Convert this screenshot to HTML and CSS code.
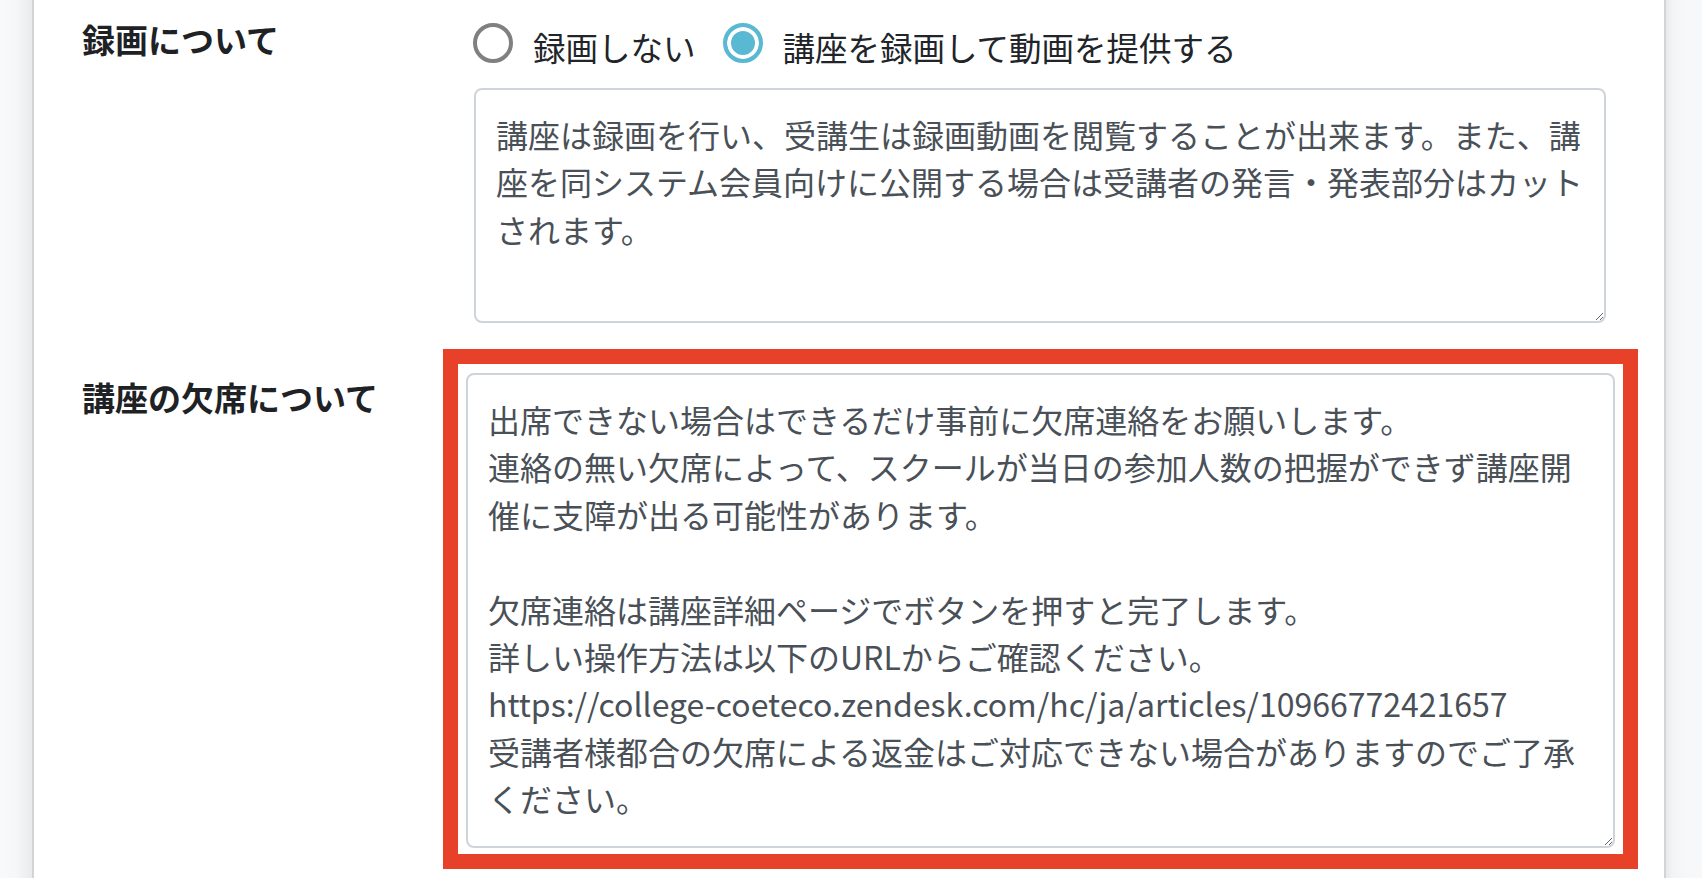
FILE: index.html
```html
<!DOCTYPE html>
<html lang="ja">
<head>
<meta charset="utf-8">
<title>講座設定</title>
<link rel="stylesheet" href="styles.css">
</head>
<body>
<div class="page">
  <div class="gutter gutter-left"></div>
  <main class="main">
    <div class="form">
      <div class="form-label first">録画について</div>
      <div class="control">
        <div class="radios">
          <label class="radio"><input type="radio" name="rec" value="0"><span>録画しない</span></label>
          <label class="radio"><input type="radio" name="rec" value="1" checked><span>講座を録画して動画を提供する</span></label>
        </div>
        <textarea class="field field-rec">講座は録画を行い、受講生は録画動画を閲覧することが出来ます。また、講座を同システム会員向けに公開する場合は受講者の発言・発表部分はカットされます。</textarea>
      </div>

      <div class="form-label second">講座の欠席について</div>
      <div class="control highlight">
        <textarea class="field field-absence">出席できない場合はできるだけ事前に欠席連絡をお願いします。
連絡の無い欠席によって、スクールが当日の参加人数の把握ができず講座開催に支障が出る可能性があります。

欠席連絡は講座詳細ページでボタンを押すと完了します。
詳しい操作方法は以下のURLからご確認ください。
https://college-coeteco.zendesk.com/hc/ja/articles/10966772421657
受講者様都合の欠席による返金はご対応できない場合がありますのでご了承ください。</textarea>
      </div>
    </div>
  </main>
  <div class="gutter gutter-right"></div>
</div>
</body>
</html>
```

FILE: styles.css
```css
* { box-sizing: border-box; }

html, body {
  margin: 0;
  padding: 0;
  height: 100%;
  background: #ffffff;
  font-family: "Noto Sans CJK JP", "Noto Sans", sans-serif;
  color: #212529;
}

.page {
  display: flex;
  height: 878px;
  overflow: hidden;
}

.gutter-left {
  width: 34px;
  flex: none;
  background: linear-gradient(to right, #f8f9fb 0%, #f6f7f9 50%, #e9eaec 100%);
  border-right: 2px solid #d3d4d6;
}

.gutter-right {
  flex: 1;
  border-left: 2px solid #d3d4d6;
  background: linear-gradient(to right, #e9eaec 0%, #f3f4f6 20%, #f7f8fa 60%);
}

.main {
  width: 1630px;
  flex: none;
  padding: 15px 58px 0 48px;
  background: #ffffff;
}

.form {
  display: grid;
  grid-template-columns: 392px 1fr;
  row-gap: 26px;
  align-items: start;
}

.form-label {
  font-size: 33px;
  line-height: 48px;
  font-weight: 700;
  color: #1f2225;
  white-space: nowrap;
}

.form-label.second {
  margin-top: 24px;
}

.control {
  display: flex;
  flex-direction: column;
}

.radios {
  display: flex;
  align-items: flex-start;
  margin-top: 8px;
  margin-bottom: 18px;
}

.radio {
  display: flex;
  align-items: flex-start;
  margin-right: 28px;
  font-size: 32.5px;
  line-height: 47px;
  color: #212529;
  cursor: pointer;
}

.radio input {
  appearance: none;
  -webkit-appearance: none;
  flex: none;
  width: 40px;
  height: 40px;
  margin: 0 20px 0 -1px;
  border: 4px solid #808080;
  border-radius: 50%;
  background: #ffffff;
}

.radio input:checked {
  border-color: #5ab9d2;
  background: #5ab9d2;
  box-shadow: inset 0 0 0 4px #ffffff;
}

.field {
  display: block;
  width: 100%;
  margin: 0;
  border: 2px solid #ced4da;
  border-radius: 8px;
  padding: 21px 12px 0 20px;
  font-family: "Noto Sans CJK JP", "Noto Sans", sans-serif;
  font-size: 32px;
  line-height: 47.4px;
  color: #495057;
  background: #ffffff;
  outline: none;
}

.field-rec {
  height: 235px;
}

.highlight {
  margin: 0 -32px 0 -31px;
  border: 15px solid #e8412a;
  padding: 9px 8px 6px 8px;
  background: #ffffff;
}

.field-absence {
  height: 475px;
}
```
